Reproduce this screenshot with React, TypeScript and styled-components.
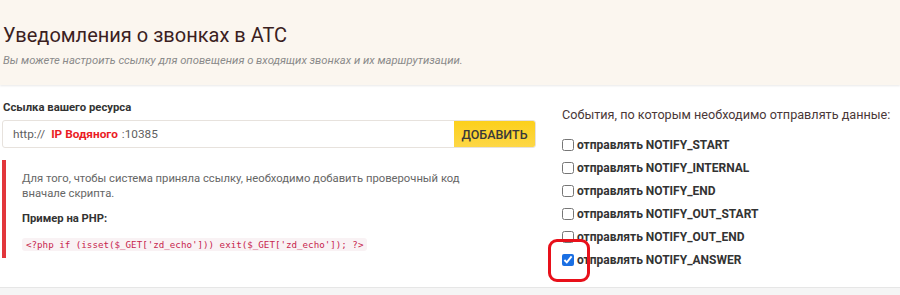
import * as React from 'react';
import styled, { createGlobalStyle } from 'styled-components';

const GlobalStyle = createGlobalStyle`
  html, body {
    margin: 0;
    padding: 0;
    background: #fff;
  }
  body {
    font-family: Roboto, "Liberation Sans", Arial, sans-serif;
    color: #333;
  }
`;

const Page = styled.div`
  width: 900px;
  height: 295px;
  display: flex;
  flex-direction: column;
  overflow: hidden;
`;

const Header = styled.div`
  height: 85px;
  box-sizing: border-box;
  padding: 23px 3px 0;
  background-color: #fbf6ef;
  box-shadow: 0 1px 2px rgba(0, 0, 0, 0.09);
  position: relative;
  z-index: 1;
`;

const Title = styled.h1`
  margin: 0;
  font-size: 20px;
  line-height: 24px;
  font-weight: 400;
  color: #3b1f1f;
`;

const Subtitle = styled.p`
  margin: 7px 0 0;
  font-size: 11.25px;
  line-height: 14px;
  font-style: italic;
  color: #8a8a8a;
`;

const Main = styled.div`
  flex: 1;
  display: flex;
  padding: 15px 0 0 2px;
`;

const LeftColumn = styled.div`
  width: 534px;
  display: flex;
  flex-direction: column;
`;

const RightColumn = styled.div`
  margin-left: 26px;
  padding-top: 7px;
  display: flex;
  flex-direction: column;
`;

const FieldLabel = styled.div`
  font-size: 11.3px;
  line-height: 15px;
  font-weight: 700;
  color: #333;
  margin-bottom: 5px;
  padding-left: 1px;
`;

const InputGroup = styled.div`
  display: flex;
  height: 28px;
  box-sizing: border-box;
  border: 1px solid #e7e2dd;
  border-radius: 3px;
  overflow: hidden;
`;

const InputValue = styled.div`
  flex: 1;
  display: flex;
  align-items: center;
  padding-left: 10px;
  font-size: 11.8px;
  color: #5f5f5f;
`;

const Host = styled.span`
  font-weight: 700;
  color: #ea1c24;
  margin: 0 4px 0 6px;
`;

const AddButton = styled.button`
  width: 81px;
  border: 0;
  margin: 0;
  padding: 0;
  background: linear-gradient(#fcd01b, #fdd747);
  font-family: inherit;
  font-size: 12.5px;
  font-weight: 500;
  color: #3a3a3a;
`;

const Alert = styled.div`
  margin-top: 12px;
  border-left: 4px solid #e2363b;
  padding: 11px 0 7px 16px;
`;

const AlertText = styled.p<{ $bold?: boolean }>`
  margin: 0 0 ${p => (p.$bold ? '12px' : '10px')};
  max-width: 470px;
  font-size: 11.25px;
  line-height: 15px;
  font-weight: ${p => (p.$bold ? 700 : 400)};
  color: ${p => (p.$bold ? '#333' : '#666')};
`;

const Code = styled.code`
  display: block;
  width: fit-content;
  padding: 1px 4px;
  font-family: "DejaVu Sans Mono", "Liberation Mono", monospace;
  font-size: 9.2px;
  line-height: 11px;
  color: #c7254e;
  background-color: #f9f2f4;
  border-radius: 3px;
`;

const EventsTitle = styled.div`
  font-size: 12.65px;
  line-height: 16px;
  color: #4a3838;
  margin-bottom: 10px;
  white-space: nowrap;
`;

const CheckRow = styled.label`
  position: relative;
  display: flex;
  align-items: center;
  height: 23px;
  font-size: 12px;
  font-weight: 700;
  color: #333;
`;

const Check = styled.input`
  width: 12px;
  height: 12px;
  margin: 0 3px 0 0;
  accent-color: #1a6fe3;
`;

const Highlight = styled.span`
  position: absolute;
  left: -14px;
  top: -9px;
  width: 42px;
  height: 43px;
  box-sizing: border-box;
  border: 3.5px solid #e8101a;
  border-radius: 9px;
  pointer-events: none;
`;

const Footer = styled.div`
  height: 7px;
  background-color: #f5f5f5;
  border-top: 1px solid #e6e6e6;
`;

const events = [
  { code: 'NOTIFY_START', checked: false },
  { code: 'NOTIFY_INTERNAL', checked: false },
  { code: 'NOTIFY_END', checked: false },
  { code: 'NOTIFY_OUT_START', checked: false },
  { code: 'NOTIFY_OUT_END', checked: false },
  { code: 'NOTIFY_ANSWER', checked: true },
];

export default function App() {
  return (
    <Page>
      <GlobalStyle />
      <Header>
        <Title>Уведомления о звонках в АТС</Title>
        <Subtitle>Вы можете настроить ссылку для оповещения о входящих звонках и их маршрутизации.</Subtitle>
      </Header>
      <Main>
        <LeftColumn>
          <FieldLabel>Ссылка вашего ресурса</FieldLabel>
          <InputGroup>
            <InputValue>
              http://
              <Host>IP Водяного</Host>
              :10385
            </InputValue>
            <AddButton type="button">ДОБАВИТЬ</AddButton>
          </InputGroup>
          <Alert>
            <AlertText>
              Для того, чтобы система приняла ссылку, необходимо добавить проверочный код вначале скрипта.
            </AlertText>
            <AlertText $bold>Пример на PHP:</AlertText>
            <Code>{"<?php if (isset($_GET['zd_echo'])) exit($_GET['zd_echo']); ?>"}</Code>
          </Alert>
        </LeftColumn>
        <RightColumn>
          <EventsTitle>События, по которым необходимо отправлять данные:</EventsTitle>
          {events.map(ev => (
            <CheckRow key={ev.code}>
              <Check type="checkbox" defaultChecked={ev.checked} />
              отправлять {ev.code}
              {ev.checked && <Highlight />}
            </CheckRow>
          ))}
        </RightColumn>
      </Main>
      <Footer />
    </Page>
  );
}
